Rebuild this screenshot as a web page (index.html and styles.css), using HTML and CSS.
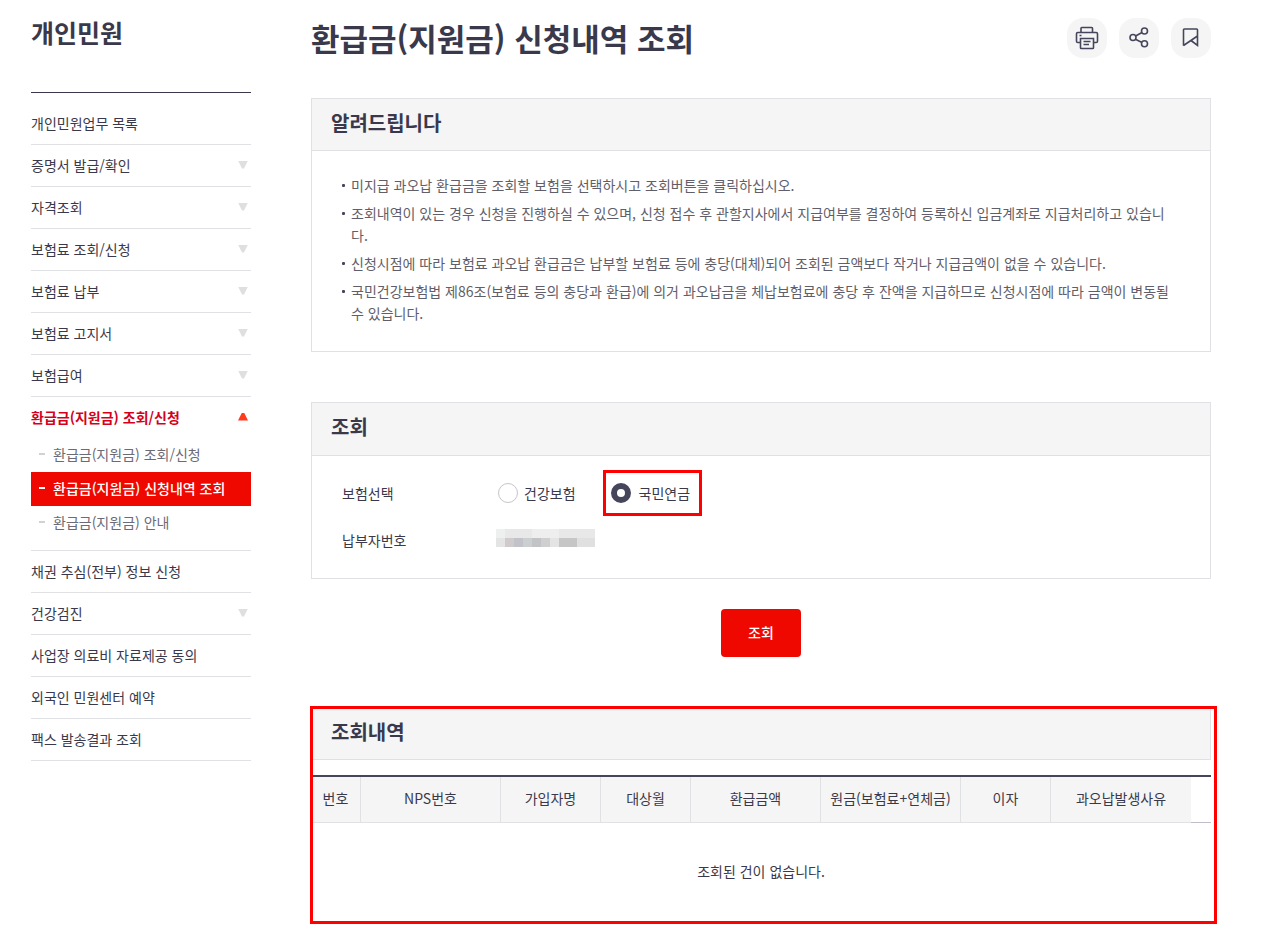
FILE: index.html
```html
<!DOCTYPE html>
<html lang="ko">
<head>
<meta charset="utf-8">
<title>환급금(지원금) 신청내역 조회</title>
<link rel="stylesheet" href="styles.css">
</head>
<body>
<div class="page">
  <aside class="side">
    <h2 class="side-title">개인민원</h2>
    <nav>
      <ul class="menu">
        <li><a class="menu-link" href="#">개인민원업무 목록</a></li>
        <li><a class="menu-link has-sub" href="#">증명서 발급/확인</a></li>
        <li><a class="menu-link has-sub" href="#">자격조회</a></li>
        <li><a class="menu-link has-sub" href="#">보험료 조회/신청</a></li>
        <li><a class="menu-link has-sub" href="#">보험료 납부</a></li>
        <li><a class="menu-link has-sub" href="#">보험료 고지서</a></li>
        <li><a class="menu-link has-sub" href="#">보험급여</a></li>
        <li>
          <a class="menu-link has-sub open" href="#">환급금(지원금) 조회/신청</a>
          <ul class="submenu">
            <li><a class="sub-link" href="#">환급금(지원금) 조회/신청</a></li>
            <li><a class="sub-link current" href="#" aria-current="page">환급금(지원금) 신청내역 조회</a></li>
            <li><a class="sub-link" href="#">환급금(지원금) 안내</a></li>
          </ul>
        </li>
        <li><a class="menu-link" href="#">채권 추심(전부) 정보 신청</a></li>
        <li><a class="menu-link has-sub" href="#">건강검진</a></li>
        <li><a class="menu-link" href="#">사업장 의료비 자료제공 동의</a></li>
        <li><a class="menu-link" href="#">외국인 민원센터 예약</a></li>
        <li><a class="menu-link" href="#">팩스 발송결과 조회</a></li>
      </ul>
    </nav>
  </aside>

  <main class="main">
    <header class="head">
      <h1 class="title">환급금(지원금) 신청내역 조회</h1>
      <div class="tools">
        <button class="tool" type="button" aria-label="인쇄">
          <svg viewBox="0 0 24 24" width="24" height="24"><path d="M6 6.500V2.300Q6 1.500 6.800 1.500H16.700Q17.500 1.500 17.500 2.300V6.500M5.500 16.500H2.800Q1.500 16.500 1.500 15.200V7.800Q1.500 6.500 2.800 6.500H21.200Q22.500 6.500 22.500 7.800V15.200Q22.500 16.500 21.200 16.500H18.500M5.500 12.500H18.500V21.700Q18.500 22.500 17.700 22.500H6.300Q5.500 22.500 5.500 21.700ZM4.500 9.500H6.500M8.500 15.500H15.500M8.500 18.500H14"/></svg>
        </button>
        <button class="tool" type="button" aria-label="공유">
          <svg viewBox="0 0 24 24" width="24" height="24"><circle cx="6" cy="11.500" r="3"/><circle cx="17.500" cy="5" r="3"/><circle cx="17.500" cy="17.700" r="3"/><path d="M8.600 10L15 6.500M8.400 13.300L15 16.500"/></svg>
        </button>
        <button class="tool" type="button" aria-label="즐겨찾기">
          <svg viewBox="0 0 24 24" width="24" height="24"><path d="M4.500 19.700V3.800Q4.500 3 5.300 3H17.700Q18.500 3 18.500 3.800V19.500L12 14.500M4.500 19.500L18.500 10"/></svg>
        </button>
      </div>
    </header>

    <section class="panel">
      <h2 class="panel-title">알려드립니다</h2>
      <ul class="notes">
        <li>미지급 과오납 환급금을 조회할 보험을 선택하시고 조회버튼을 클릭하십시오.</li>
        <li>조회내역이 있는 경우 신청을 진행하실 수 있으며, 신청 접수 후 관할지사에서 지급여부를 결정하여 등록하신 입금계좌로 지급처리하고 있습니다.</li>
        <li>신청시점에 따라 보험료 과오납 환급금은 납부할 보험료 등에 충당(대체)되어 조회된 금액보다 작거나 지급금액이 없을 수 있습니다.</li>
        <li>국민건강보험법 제86조(보험료 등의 충당과 환급)에 의거 과오납금을 체납보험료에 충당 후 잔액을 지급하므로 신청시점에 따라 금액이 변동될 수 있습니다.</li>
      </ul>
    </section>

    <form class="search">
      <section class="panel">
        <h2 class="panel-title tall">조회</h2>
        <div class="fields">
          <div class="field" role="radiogroup" aria-labelledby="kind">
            <span class="field-name" id="kind">보험선택</span>
            <label class="choice"><input type="radio" name="kind">건강보험</label>
            <label class="choice marked"><input type="radio" name="kind" checked>국민연금</label>
          </div>
          <div class="field">
            <span class="field-name">납부자번호</span>
            <svg class="masked" viewBox="0 0 99 18" width="99" height="18" role="img" aria-label="가려진 번호">
              <rect width="99" height="18" fill="#e8e8e9"/>
              <rect width="9" height="9" fill="#eef0f0"/><rect x="36" width="27" height="9" fill="#eeeeee"/>
              <rect y="9" width="9" height="9" fill="#e4e4e4"/><rect x="9" y="9" width="9" height="9" fill="#d0cacb"/>
              <rect x="18" y="9" width="9" height="9" fill="#c2c2cb"/><rect x="27" y="9" width="9" height="9" fill="#cccfd2"/>
              <rect x="36" y="9" width="9" height="9" fill="#c2c3c5"/><rect x="45" y="9" width="9" height="9" fill="#cfcfd1"/>
              <rect x="54" y="9" width="9" height="9" fill="#e4e4e5"/><rect x="63" y="9" width="18" height="9" fill="#c6c6c7"/>
              <rect x="81" y="9" width="18" height="9" fill="#e0e0e1"/>
            </svg>
          </div>
        </div>
      </section>
      <button class="submit" type="button">조회</button>
    </form>

    <section class="result">
      <div class="panel"><h2 class="panel-title last">조회내역</h2></div>
      <table class="grid">
        <colgroup><col class="w50"><col class="w140"><col class="w100"><col class="w90"><col class="w130"><col class="w140"><col class="w90"><col class="w140"><col></colgroup>
        <thead>
          <tr><th scope="col">번호</th><th scope="col">NPS번호</th><th scope="col">가입자명</th><th scope="col">대상월</th><th scope="col">환급금액</th><th scope="col">원금(보험료+연체금)</th><th scope="col">이자</th><th scope="col">과오납발생사유</th><td class="spare"></td></tr>
        </thead>
        <tbody><tr><td class="empty" colspan="9">조회된 건이 없습니다.</td></tr></tbody>
      </table>
    </section>
  </main>
</div>
</body>
</html>
```
FILE: styles.css
```css
* { box-sizing: border-box; }
body {
  margin: 0;
  background: #fff;
  color: #3a394b;
  font: 14px/22px "Noto Sans CJK KR", sans-serif;
}
h1, h2, ul { margin: 0; padding: 0; }
ul { list-style: none; }
a { color: inherit; text-decoration: none; }
button, input { font: inherit; }

.page { display: flex; gap: 60px; padding: 0 76px 14px 31px; }

.side { flex: 0 0 220px; }
.side-title { padding-top: 14px; height: 92px; font-size: 25px; line-height: 36px; }
.menu { padding-top: 10px; border-top: 1px solid #3a394b; }
.menu > li { border-bottom: 1px solid #e0e1e5; }
.menu-link { display: flex; align-items: center; justify-content: space-between; height: 41px; padding: 0 3px 2px 0; }
.has-sub::after {
  content: "";
  width: 10px;
  height: 8px;
  background: #dfdfdf;
  clip-path: polygon(0 0, 100% 0, 60% 100%, 40% 100%);
}
.open { color: #d5001c; font-weight: 700; }
.open::after { background: #ff3a1d; clip-path: polygon(40% 0, 60% 0, 100% 100%, 0 100%); }
.submenu { padding-bottom: 10px; }
.sub-link { display: flex; align-items: center; gap: 8px; height: 34px; padding: 0 0 2px 8px; color: #6b6a75; }
.sub-link::before { content: ""; width: 6px; height: 2px; background: #d2d2d4; }
.current { background: #ef0800; color: #fff; font-weight: 500; }
.current::before { background: #fff; }

.main { flex: 1; min-width: 0; }
.head { display: flex; justify-content: space-between; height: 98px; padding-top: 18px; }
.title { font-size: 31px; line-height: 40px; }
.tools { display: flex; gap: 12px; }
.tool {
  display: flex;
  align-items: center;
  justify-content: center;
  width: 40px;
  height: 40px;
  padding: 0;
  border: 0;
  border-radius: 16px;
  background: #f5f5f5;
}
.tool svg { fill: none; stroke: #45465c; stroke-width: 1.6; }

.panel { border: 1px solid #e0e1e5; }
.panel-title {
  height: 52px;
  padding: 9px 19px;
  border-bottom: 1px solid #e0e1e5;
  background: #f5f5f5;
  font-size: 20px;
  font-weight: 700;
  line-height: 30px;
}
.tall { height: 53px; }
.last { height: 51px; border-bottom: 0; }
.notes { display: grid; gap: 6px; padding: 23px 40px 27px 30px; color: #5f5e69; }
.notes li { display: flex; gap: 6px; }
.notes li::before { content: ""; flex: none; width: 3px; height: 3px; margin-top: 10px; border-radius: 1px; background: #45465c; }

.search { display: flex; flex-direction: column; align-items: center; gap: 30px; margin: 50px 0; }
.search .panel { width: 100%; }
.fields { padding: 13px 30px 15px; }
.field { display: flex; align-items: center; height: 47px; }
.field-name { width: 154px; }
.masked { margin-bottom: 4px; }
.choice { position: relative; display: flex; align-items: center; gap: 6px; margin: 0 33px 0 2px; }
.choice input {
  appearance: none;
  width: 20px;
  height: 20px;
  margin: 0;
  border: 1px solid #c5c5cc;
  border-radius: 50%;
  background: #fff;
}
.choice input:checked { border: 6px solid #45465c; }
.marked { gap: 8px; }
.marked::after { content: ""; position: absolute; inset: -12px -12px -12px -8px; border: 3px solid #f00; }
.submit { width: 80px; height: 48px; padding: 0 0 2px; border: 0; border-radius: 4px; background: #ef0800; color: #fff; font-weight: 500; }

.result { position: relative; }
.result::after { content: ""; position: absolute; inset: -1px -6px -4px -1px; border: 3px solid #f00; }
.grid { width: 100%; margin-top: 15px; border-top: 2px solid #45465c; border-spacing: 0; table-layout: fixed; }
.grid th { height: 46px; padding: 0 0 4px; border-right: 1px solid #e0e1e5; border-bottom: 1px solid #e0e1e5; background: #f5f5f5; font-weight: 400; white-space: nowrap; }
.grid th:nth-child(8) { border-right: 0; }
.grid .spare { padding: 0; border-bottom: 1px solid #bdbec9; }
.empty { height: 97px; padding: 0 0 2px; text-align: center; }
.w50 { width: 50px; }
.w90 { width: 90px; }
.w100 { width: 100px; }
.w130 { width: 130px; }
.w140 { width: 140px; }
```
